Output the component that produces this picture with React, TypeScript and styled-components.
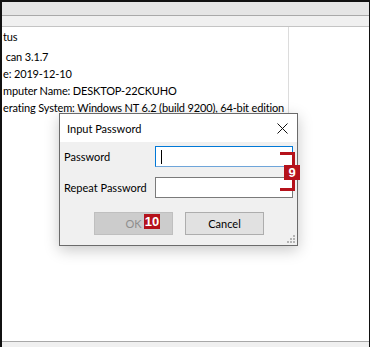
import React from "react";
import styled, { createGlobalStyle } from "styled-components";

const Global = createGlobalStyle`
  html, body { margin: 0; padding: 0; background: #ffffff; }
  body { font-family: Lato, "Noto Sans", sans-serif; }
  * { box-sizing: border-box; }
`;

const Frame = styled.div`
  width: 370px;
  height: 347px;
  display: flex;
  flex-direction: column;
  border-top: 2px solid #111;
  border-left: 2px solid #111;
  border-right: 1px solid #111;
  background: #fff;
  overflow: hidden;
`;

const Band = styled.div<{ $h: number; $bg: string; $line: string }>`
  height: ${(p) => p.$h}px;
  background: ${(p) => p.$bg};
  border-bottom: 1px solid ${(p) => p.$line};
  flex: none;
`;

const Content = styled.div`
  flex: 1;
  position: relative;
  display: grid;
  grid-template-columns: 287px 1fr;
  align-items: start;
`;

const InfoColumn = styled.div`
  height: 213px;
  border-right: 1px solid #dcdcdc;
  padding: 1px 0 0 1px;
  font-size: 11px;
  letter-spacing: -0.15px;
  color: #000;
  white-space: nowrap;
  overflow: hidden;
`;

const InfoLine = styled.div<{ $gap?: number }>`
  height: 17px;
  line-height: 17px;
  margin-bottom: ${(p) => p.$gap ?? 0}px;
`;

const StatusBar = styled.div`
  height: 6px;
  flex: none;
  background: #f0f0f0;
  border-top: 1px solid #a8a8a8;
`;

const Dialog = styled.div`
  position: absolute;
  left: 57px;
  top: 86px;
  width: 239px;
  height: 133px;
  border: 1px solid #6b6b6b;
  background: #f0f0f0;
  display: flex;
  flex-direction: column;
  box-shadow: 0 4px 14px rgba(0, 0, 0, 0.22);
`;

const TitleBar = styled.div`
  height: 28px;
  background: #fff;
  display: flex;
  align-items: center;
  justify-content: space-between;
  padding: 0 9px 0 7px;
  font-size: 11px;
  color: #000;
`;

const CloseIcon = () => (
  <svg width="11" height="11" viewBox="0 0 11 11">
    <path d="M0.5 0.5 L10.5 10.5 M10.5 0.5 L0.5 10.5" stroke="#111" strokeWidth="1" />
  </svg>
);

const Body = styled.div`
  flex: 1;
  position: relative;
  padding: 4px 3px 0 4px;
  display: flex;
  flex-direction: column;
`;

const FormGrid = styled.div`
  display: grid;
  grid-template-columns: 91px 138px;
  grid-auto-rows: 21px;
  row-gap: 10px;
  align-items: center;
  font-size: 11px;
  color: #000;
  white-space: nowrap;
`;

const Field = styled.div<{ $focused?: boolean }>`
  height: 21px;
  background: #fff;
  border: 1px solid ${(p) => (p.$focused ? "#0078d7" : "#7a7a7a")};
  ${(p) => (p.$focused ? "border-bottom-color: #6fa5d9;" : "")}
  display: flex;
  align-items: center;
  padding-left: 5px;
`;

const Caret = styled.span`
  width: 1px;
  height: 14px;
  background: #000;
`;

const Buttons = styled.div`
  margin-top: 14px;
  display: flex;
  justify-content: center;
  gap: 12px;
`;

const Button = styled.div<{ $disabled?: boolean }>`
  position: relative;
  width: 79px;
  height: 23px;
  display: flex;
  align-items: center;
  justify-content: center;
  font-size: 11px;
  background: ${(p) => (p.$disabled ? "#cccccc" : "#e1e1e1")};
  border: 1px solid ${(p) => (p.$disabled ? "#bfbfbf" : "#adadad")};
  color: ${(p) => (p.$disabled ? "#8e8e8e" : "#000")};
`;

const Badge = styled.div`
  position: absolute;
  width: 16px;
  height: 15px;
  background: #b5121b;
  color: #fff;
  font-family: "Liberation Sans", Arial, sans-serif;
  font-weight: bold;
  font-size: 13px;
  display: flex;
  align-items: center;
  justify-content: center;
  line-height: 1;
`;

const OkBadge = styled(Badge)`
  left: 49px;
  top: 1px;
  width: 16px;
`;

const Grip = styled.svg`
  position: absolute;
  right: 2px;
  bottom: 2px;
`;

const Bracket = styled.div`
  position: absolute;
  left: 278px;
  top: 125px;
  width: 15px;
  height: 39px;
  border: 3px solid #b5121b;
  border-left: none;
`;

const BracketBadge = styled(Badge)`
  left: 282px;
  top: 138px;
`;

export default function App() {
  return (
    <>
      <Global />
      <Frame>
        <Band $h={14} $bg="#e5e5e5" $line="#a9a9a9" />
        <Band $h={11} $bg="#f0f0f0" $line="#c4c4c4" />
        <Content>
          <InfoColumn>
            <InfoLine $gap={3}>tus</InfoLine>
            <InfoLine>&nbsp;can 3.1.7</InfoLine>
            <InfoLine>e: 2019-12-10</InfoLine>
            <InfoLine>mputer Name: DESKTOP-22CKUHO</InfoLine>
            <InfoLine>erating System: Windows NT 6.2 (build 9200), 64-bit edition</InfoLine>
          </InfoColumn>
          <div />
          <Dialog>
            <TitleBar>
              <span>Input Password</span>
              <CloseIcon />
            </TitleBar>
            <Body>
              <FormGrid>
                <span>Password</span>
                <Field $focused>
                  <Caret />
                </Field>
                <span>Repeat Password</span>
                <Field />
              </FormGrid>
              <Buttons>
                <Button $disabled>
                  OK
                  <OkBadge>10</OkBadge>
                </Button>
                <Button>Cancel</Button>
              </Buttons>
              <Grip width="8" height="8" viewBox="0 0 8 8">
                <g fill="#b4b4b4">
                  <rect x="6" y="0" width="2" height="2" />
                  <rect x="3" y="3" width="2" height="2" />
                  <rect x="6" y="3" width="2" height="2" />
                  <rect x="0" y="6" width="2" height="2" />
                  <rect x="3" y="6" width="2" height="2" />
                  <rect x="6" y="6" width="2" height="2" />
                </g>
              </Grip>
            </Body>
          </Dialog>
          <Bracket />
          <BracketBadge>9</BracketBadge>
        </Content>
        <StatusBar />
      </Frame>
    </>
  );
}
